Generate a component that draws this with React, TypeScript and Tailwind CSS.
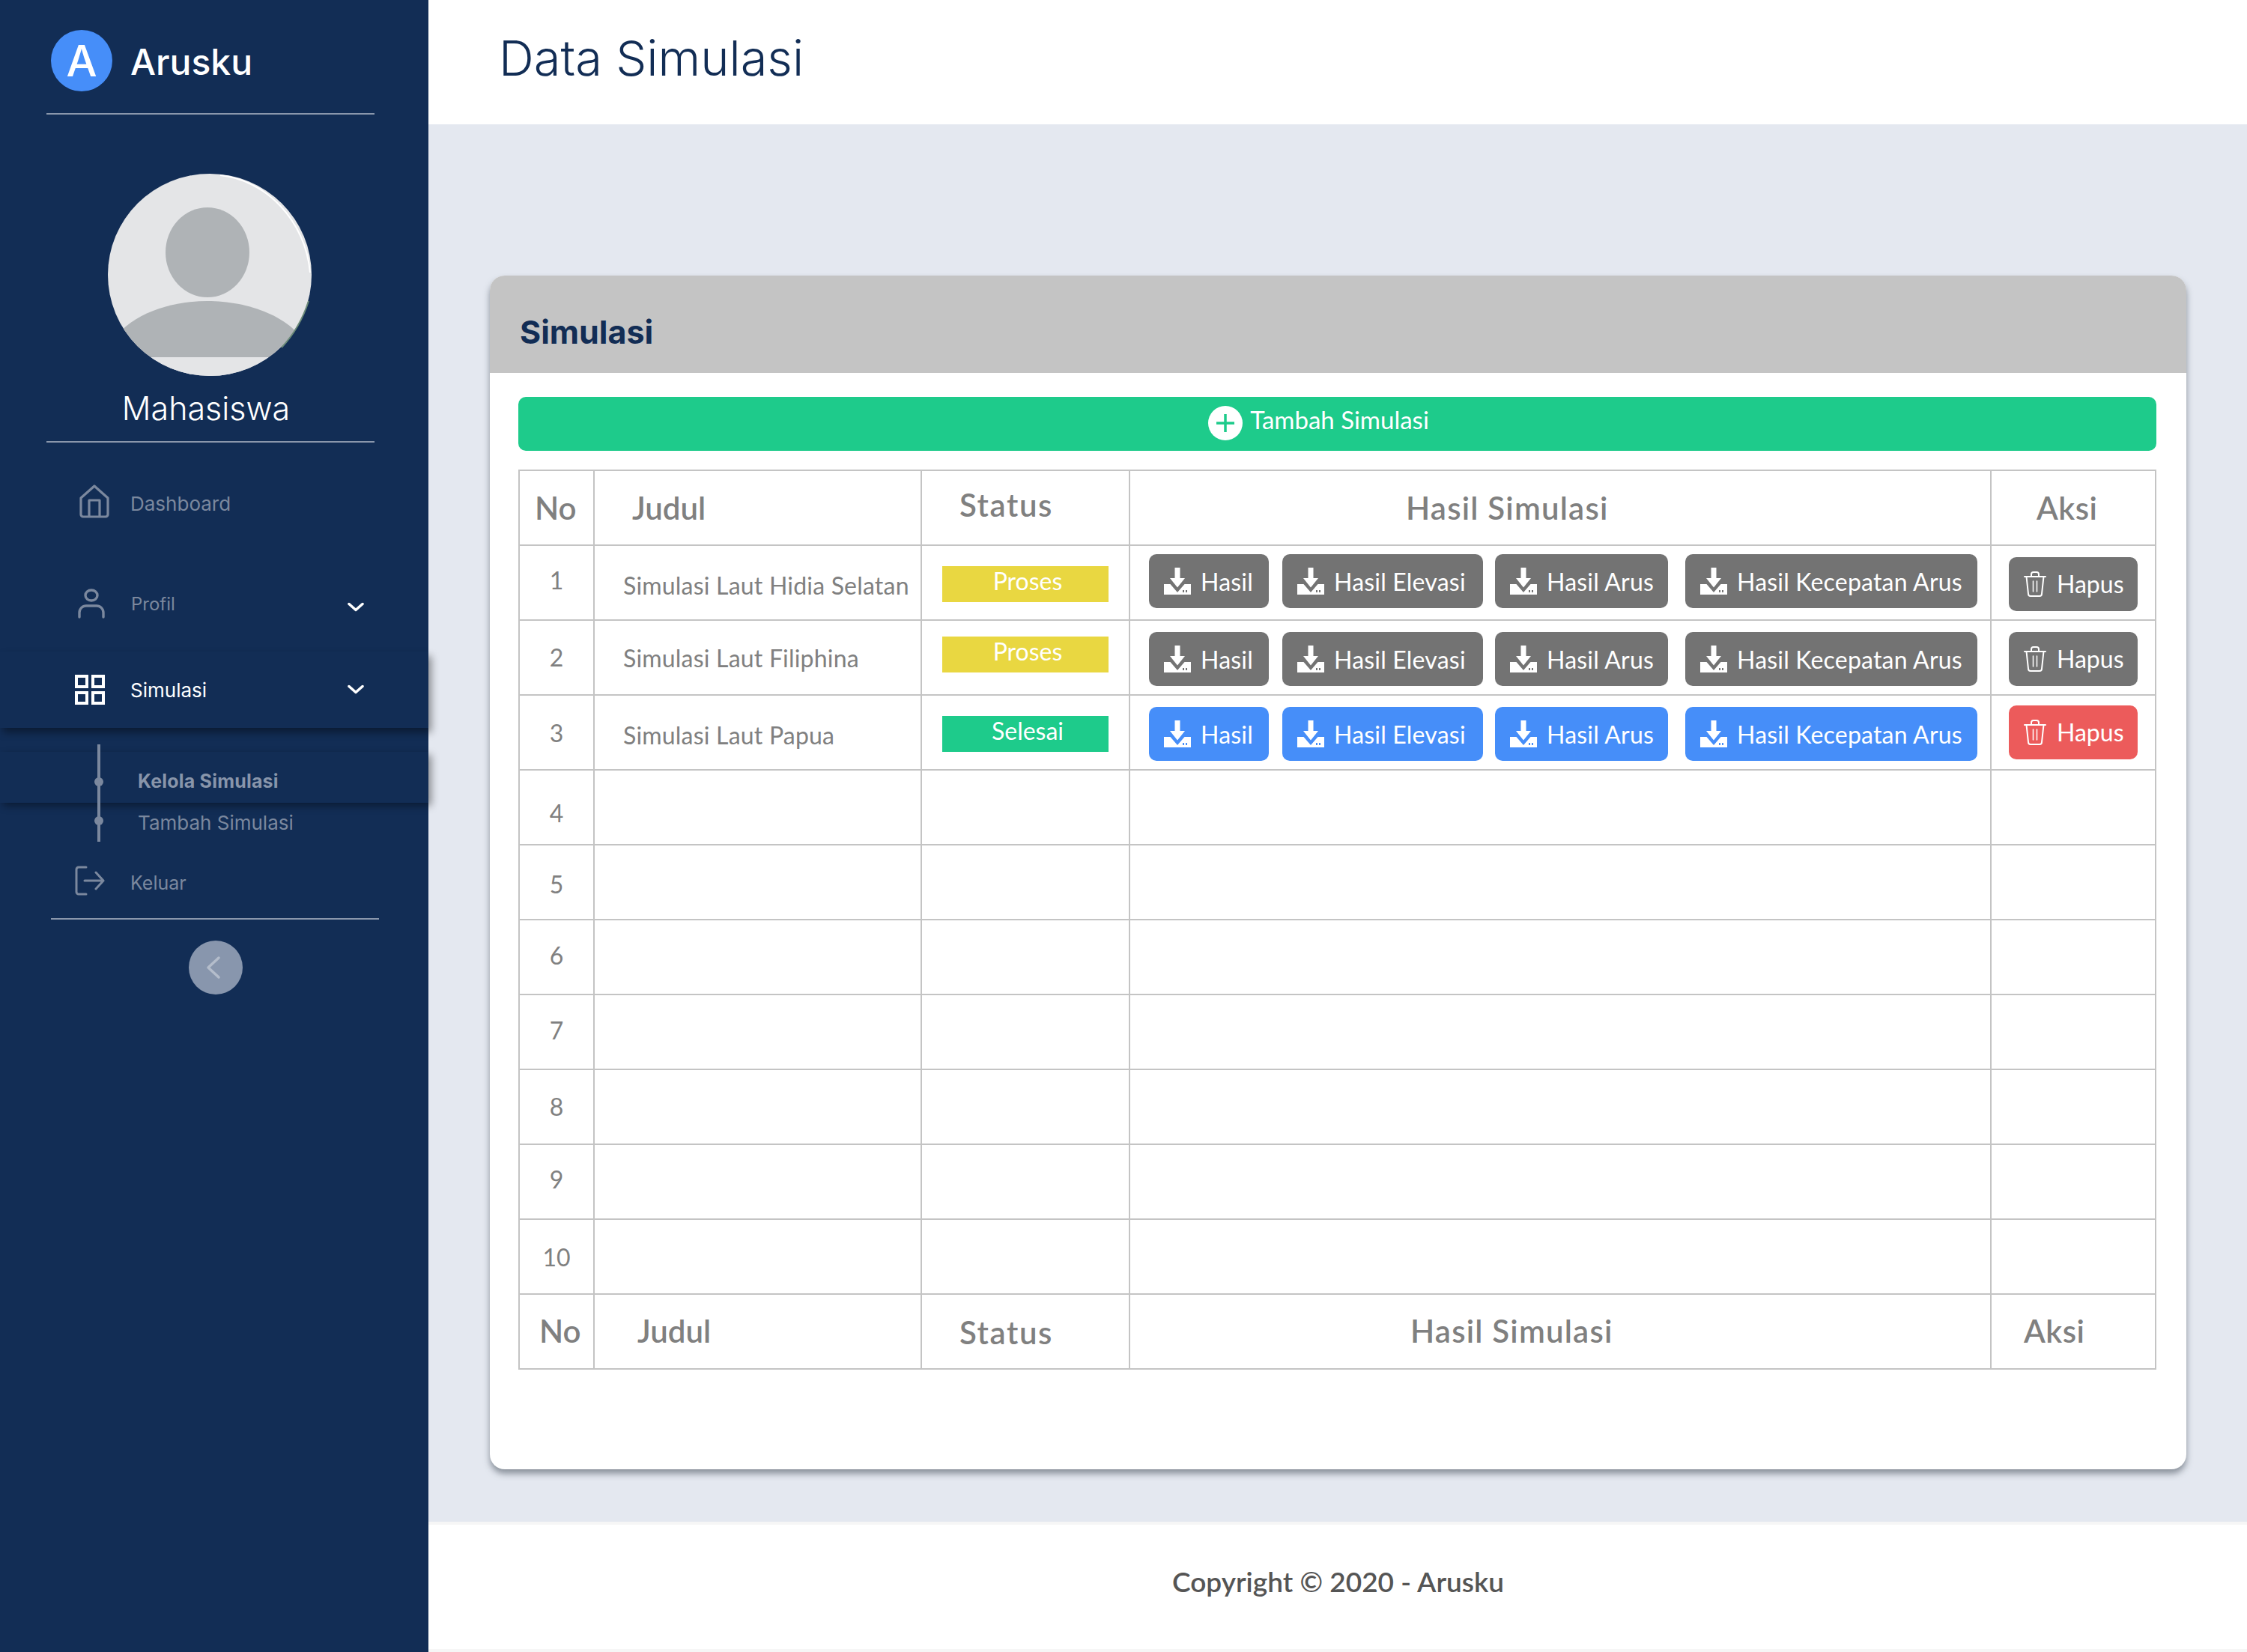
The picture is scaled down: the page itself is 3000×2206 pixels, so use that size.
import React from "react";

const rows = [
  { no: 1, title: "Simulasi Laut Hidia Selatan", status: "Proses", done: false, noPad: "pb-[6px]", titlePad: "pt-[8px]" },
  { no: 2, title: "Simulasi Laut Filiphina", status: "Proses", done: false, noPad: "", titlePad: "pt-[2px]" },
  { no: 3, title: "Simulasi Laut Papua", status: "Selesai", done: true, noPad: "pt-[2px]", titlePad: "pt-[8px]" },
];

const emptyRows = [
  { no: 4, pad: "pt-[16px]" },
  { no: 5, pad: "pt-[5px]" },
  { no: 6, pad: "pb-[4px]" },
  { no: 7, pad: "pb-[4px]" },
  { no: 8, pad: "" },
  { no: 9, pad: "pb-[6px]" },
  { no: 10, pad: "pt-[2px]" },
];

const DownloadIcon = ({ done }: { done: boolean }) => (
  <svg viewBox="0 0 36 36" className="w-9 h-9 shrink-0" fill="#fff">
    <path d="M14.5 0h7v14h6.5L18 26.5 8 14h6.5z" />
    <path d="M0 22h8.5L18 33l9.5-11H36v14H0z" />
    <rect x="25" y="30" width="2" height="3" fill={done ? "#468ef9" : "#737373"} />
    <rect x="29" y="30" width="2" height="3" fill={done ? "#468ef9" : "#737373"} />
  </svg>
);

const TrashIcon = () => (
  <svg viewBox="0 0 30 34" className="w-[30px] h-[34px] shrink-0" fill="none" stroke="#fff" strokeWidth="2" strokeLinecap="round" strokeLinejoin="round">
    <path d="M1 7h28" />
    <path d="M3.5 7l2.5 23a3 3 0 0 0 3 3h12a3 3 0 0 0 3-3l2.5-23" />
    <path d="M10 7V4a3 3 0 0 1 3-3h4a3 3 0 0 1 3 3v3" />
    <path d="M12.5 13v14M17.5 13v14" strokeWidth="1.5" />
  </svg>
);

const HouseIcon = () => (
  <svg viewBox="0 0 40 45" className="w-10 h-[45px]" fill="none" stroke="#7b889e" strokeWidth="3.2" strokeLinejoin="round">
    <path d="M2 18L20 2l18 16v22a3 3 0 0 1-3 3H5a3 3 0 0 1-3-3z" />
    <path d="M13 43V21h14v22" />
  </svg>
);

const UserIcon = () => (
  <svg viewBox="0 0 36 40" className="w-9 h-10" fill="none" stroke="#7b889e" strokeWidth="3.4" strokeLinecap="round">
    <ellipse cx="18" cy="9" rx="8" ry="7" />
    <path d="M2 38v-6a9 9 0 0 1 9-9h14a9 9 0 0 1 9 9v6" />
  </svg>
);

const GridIcon = () => (
  <svg viewBox="0 0 40 40" className="w-10 h-10" fill="none" stroke="#fff" strokeWidth="4">
    <rect x="2" y="2" width="14" height="14" />
    <rect x="24" y="2" width="14" height="14" />
    <rect x="2" y="24" width="14" height="14" />
    <rect x="24" y="24" width="14" height="14" />
  </svg>
);

const LogoutIcon = () => (
  <svg viewBox="0 0 40 40" className="w-10 h-10" fill="none" stroke="#7b889e" strokeWidth="3" strokeLinecap="round" strokeLinejoin="round">
    <path d="M15 2H5a3 3 0 0 0-3 3v30a3 3 0 0 0 3 3h10" />
    <path d="M13 20h25M28 9l10 11-10 11" />
  </svg>
);

const Chevron = () => (
  <svg viewBox="0 0 22 14" className="w-[22px] h-[14px]" fill="none" stroke="#fff" strokeWidth="3.5" strokeLinecap="round" strokeLinejoin="round">
    <path d="M2 2.5l9 8 9-8" />
  </svg>
);

const Avatar = () => (
  <svg viewBox="0 0 272 270" className="w-[272px] h-[270px]">
    <defs>
      <clipPath id="avatar-clip">
        <ellipse cx="136" cy="135" rx="136" ry="135" />
      </clipPath>
    </defs>
    <ellipse cx="136" cy="135" rx="136" ry="135" fill="#e4e5e7" />
    <g clipPath="url(#avatar-clip)">
      <ellipse cx="133" cy="105" rx="56" ry="60" fill="#afb3b6" />
      <path d="M0 245v-10C20 190 80 170 133 170s115 20 135 65v10z" fill="#afb3b6" />
      <path d="M0 245h272v25H0z" fill="#e4e5e7" />
    </g>
    <path d="M150 2c60 6 114 60 120 130" fill="none" stroke="#fff" strokeWidth="2" />
    <path d="M268 170c-8 25-20 45-36 62" fill="none" stroke="#6b8a78" strokeWidth="2" />
  </svg>
);

const ResultButton = ({ label, width, done }: { label: string; width: string; done: boolean }) => (
  <button className={`flex items-center gap-[13px] h-[72px] pl-5 rounded-[10px] text-white text-[32px] tracking-[0.2px] whitespace-nowrap ${width} ${done ? "bg-[#468ef9]" : "bg-[#737373]"}`}>
    <DownloadIcon done={done} />
    <span className="pt-[2px]">{label}</span>
  </button>
);

const HeadCell = ({ children, className = "" }: { children: React.ReactNode; className?: string }) => (
  <th className={`border-2 border-[#c4c4c4] text-left text-[#808080] text-[42px] font-semibold ${className}`}>{children}</th>
);

const Cell = ({ children, className = "" }: { children?: React.ReactNode; className?: string }) => (
  <td className={`border-2 border-[#c4c4c4] text-[#808080] text-[32px] ${className}`}>{children}</td>
);

export default function App() {
  return (
    <div className="flex min-h-screen font-['Lato',sans-serif]">
      <aside className="w-[572px] shrink-0 bg-[#122d55] font-['Inter',sans-serif] flex flex-col">
        <div className="flex items-center gap-[24px] ml-[68px] mt-10">
          <div className="w-[82px] h-[82px] rounded-full bg-[#468ef9] flex items-center justify-center text-white text-[58px] font-medium leading-none">A</div>
          <span className="text-white text-[48px] font-medium leading-none pt-[4px]">Arusku</span>
        </div>
        <div className="h-[2px] bg-[#8a97ac] mx-[62px] mt-[29px] w-[438px]" />
        <div className="ml-[144px] mt-[79px]"><Avatar /></div>
        <div className="text-white text-[43px] font-light leading-none text-center w-[550px] mt-[22px]">Mahasiswa</div>
        <div className="h-[2px] bg-[#8a97ac] ml-[62px] mt-[22px] w-[438px]" />

        <div className="flex items-center ml-[106px] mt-[56px] gap-[28px] text-[#7b889e] text-[26px] h-[45px]">
          <HouseIcon />
          <span className="pt-[5px]">Dashboard</span>
        </div>
        <div className="flex items-center ml-[104px] mt-[94px] h-10 text-[#7b889e] text-[24px]">
          <UserIcon />
          <span className="ml-[35px] w-[289px] pt-[2px]">Profil</span>
          <div className="pt-[10px]"><Chevron /></div>
        </div>
        <div className="flex items-center pl-[100px] mt-[44px] h-[102px] bg-[#122d55] shadow-[4px_6px_10px_rgba(0,0,0,0.4)] text-white text-[26px] relative">
          <GridIcon />
          <span className="ml-[34px] w-[290px]">Simulasi</span>
          <Chevron />
        </div>
        <div className="relative h-[152px]">
          <div className="absolute left-[130px] top-[22px] w-[4px] h-[130px] bg-[#7b889e] z-10" />
          <div className="absolute left-[126px] top-[66px] w-3 h-3 rounded-full bg-[#7b889e] z-10" />
          <div className="absolute left-[126px] top-[118px] w-3 h-3 rounded-full bg-[#7b889e] z-10" />
          <div className="mt-[32px] pt-[20px] h-[68px] bg-[#122d55] shadow-[4px_4px_10px_rgba(0,0,0,0.4)] pl-[184px] text-[#8895aa] text-[25px] font-bold tracking-[0.2px] leading-[38px]">Kelola Simulasi</div>
          <div className="pl-[184px] pt-[8px] text-[#7b889e] text-[26px] leading-[38px]">Tambah Simulasi</div>
        </div>
        <div className="flex items-center ml-[100px] mt-[32px] h-10 text-[#7b889e] text-[25px]">
          <LogoutIcon />
          <span className="ml-[34px] pt-[8px]">Keluar</span>
        </div>
        <div className="h-[2px] bg-[#8a97ac] ml-[68px] mt-[30px] w-[438px]" />
        <button className="ml-[252px] mt-[28px] w-[72px] h-[72px] rounded-full bg-[#8896ad] flex items-center justify-center pr-[6px]">
          <svg viewBox="0 0 20 32" className="w-5 h-8" fill="none" stroke="#b4bdcb" strokeWidth="3.5" strokeLinecap="round" strokeLinejoin="round">
            <path d="M17 3L3 16l14 13" />
          </svg>
        </button>
      </aside>

      <div className="flex-1 flex flex-col bg-[#e4e8f0]">
        <header className="h-[166px] bg-white pl-[94px] pt-[40px]">
          <h1 className="font-['Inter',sans-serif] font-light text-[#122d55] text-[65px] leading-[76px]">Data Simulasi</h1>
        </header>

        <main className="flex-1 pt-[202px] pl-[82px] pr-[84px]">
          <div className="h-[1594px] rounded-[20px] bg-white shadow-[0_6px_8px_rgba(90,100,110,0.65)] overflow-hidden">
            <div className="h-[130px] bg-[#c4c4c4] pl-10 pt-[48px]">
              <h2 className="font-['Inter',sans-serif] font-bold text-[#122d55] text-[43px] leading-[54px]">Simulasi</h2>
            </div>
            <div className="pl-[38px] pr-10 pt-8">
              <button className="w-full h-[72px] rounded-[10px] bg-[#1ecb8b] text-white text-[33px] flex justify-center items-start pt-[12px] pr-[50px] gap-[10px]">
                <span className="w-[46px] h-[46px] rounded-full bg-white flex items-center justify-center">
                  <svg viewBox="0 0 26 26" className="w-[26px] h-[26px]" stroke="#1ecb8b" strokeWidth="3.5">
                    <path d="M13 1v24M1 13h24" />
                  </svg>
                </span>
                <span className="leading-[36px]">Tambah Simulasi</span>
              </button>

              <table className="w-[2185px] table-fixed border-collapse mt-[25px]">
                <colgroup>
                  <col className="w-[100px]" />
                  <col className="w-[437px]" />
                  <col className="w-[278px]" />
                  <col className="w-[1150px]" />
                  <col className="w-[220px]" />
                </colgroup>
                <thead>
                  <tr className="h-[100px]">
                    <HeadCell className="pl-[20px]">No</HeadCell>
                    <HeadCell className="pl-[50px]">Judul</HeadCell>
                    <HeadCell className="pl-[50px] pb-[8px] tracking-[1.6px]">Status</HeadCell>
                    <HeadCell className="pl-[368px] tracking-[1.2px]">Hasil Simulasi</HeadCell>
                    <HeadCell className="pl-[60px] tracking-[0.5px]">Aksi</HeadCell>
                  </tr>
                </thead>
                <tbody>
                  {rows.map((row) => (
                    <tr key={row.no} className="h-[100px]">
                      <Cell className={`text-center ${row.noPad}`}>{row.no}</Cell>
                      <Cell className={`pl-[38px] tracking-[0.2px] ${row.titlePad}`}>{row.title}</Cell>
                      <Cell className={`align-top ${row.no === 2 ? "pt-[21px]" : "pt-[27px]"}`}>
                        <div className={`ml-[27px] pl-[6px] w-[222px] h-12 text-white text-center leading-[40px] ${row.done ? "bg-[#1ecb8b]" : "bg-[#e9d741]"}`}>{row.status}</div>
                      </Cell>
                      <Cell className={`align-top pl-[25px] ${row.no === 1 ? "pt-[11px]" : "pt-[15px]"}`}>
                        <div className="flex">
                          <ResultButton label="Hasil" width="w-[160px]" done={row.done} />
                          <div className="ml-[18px]"><ResultButton label="Hasil Elevasi" width="w-[268px]" done={row.done} /></div>
                          <div className="ml-4"><ResultButton label="Hasil Arus" width="w-[231px]" done={row.done} /></div>
                          <div className="ml-[23px]"><ResultButton label="Hasil Kecepatan Arus" width="w-[390px]" done={row.done} /></div>
                        </div>
                      </Cell>
                      <Cell className={`align-top pl-[23px] ${row.no === 3 ? "pt-[13px]" : "pt-[15px]"}`}>
                        <button className={`flex items-center gap-[14px] w-[172px] h-[72px] pl-5 rounded-[10px] text-white text-[32px] ${row.done ? "bg-[#ec5b5b]" : "bg-[#737373]"}`}>
                          <TrashIcon />
                          <span>Hapus</span>
                        </button>
                      </Cell>
                    </tr>
                  ))}
                  {emptyRows.map((row) => (
                    <tr key={row.no} className="h-[100px]">
                      <Cell className={`text-center ${row.pad}`}>{row.no}</Cell>
                      <Cell />
                      <Cell />
                      <Cell />
                      <Cell />
                    </tr>
                  ))}
                  <tr className="h-[100px]">
                    <HeadCell className="pl-[26px] pb-[2px]">No</HeadCell>
                    <HeadCell className="pl-[57px] pb-[2px]">Judul</HeadCell>
                    <HeadCell className="pl-[50px] pt-[2px] tracking-[1.6px]">Status</HeadCell>
                    <HeadCell className="pl-[374px] pb-[2px] tracking-[1.2px]">Hasil Simulasi</HeadCell>
                    <HeadCell className="pl-[43px] pb-[2px] tracking-[0.5px]">Aksi</HeadCell>
                  </tr>
                </tbody>
              </table>
            </div>
          </div>
        </main>

        <footer className="h-[174px] bg-white border-t-4 border-b-4 border-[#f6f6f6] flex items-center justify-center text-[#555] text-[37px] font-semibold pr-[2px] pb-[14px]">
          Copyright © 2020 - Arusku
        </footer>
      </div>
    </div>
  );
}
